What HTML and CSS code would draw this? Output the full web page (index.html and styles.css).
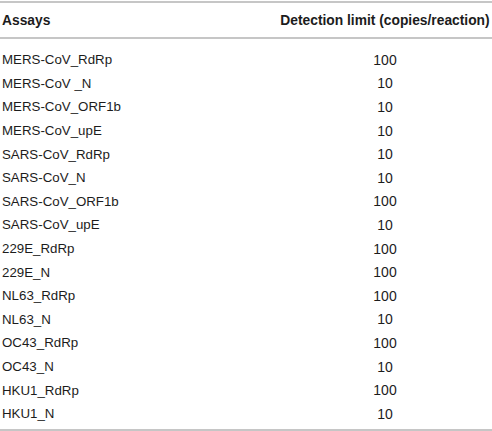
FILE: index.html
```html
<!DOCTYPE html>
<html>
<head>
<meta charset="utf-8">
<link rel="stylesheet" href="styles.css">
</head>
<body>
<div class="table">
  <div class="head">
    <div class="c1">Assays</div>
    <div class="c2">Detection limit (copies/reaction)</div>
  </div>
  <div class="body">
    <div class="c1">MERS-CoV_RdRp</div><div class="c2">100</div>
    <div class="c1">MERS-CoV _N</div><div class="c2">10</div>
    <div class="c1">MERS-CoV_ORF1b</div><div class="c2">10</div>
    <div class="c1">MERS-CoV_upE</div><div class="c2">10</div>
    <div class="c1">SARS-CoV_RdRp</div><div class="c2">10</div>
    <div class="c1">SARS-CoV_N</div><div class="c2">10</div>
    <div class="c1">SARS-CoV_ORF1b</div><div class="c2">100</div>
    <div class="c1">SARS-CoV_upE</div><div class="c2">10</div>
    <div class="c1">229E_RdRp</div><div class="c2">100</div>
    <div class="c1">229E_N</div><div class="c2">100</div>
    <div class="c1">NL63_RdRp</div><div class="c2">100</div>
    <div class="c1">NL63_N</div><div class="c2">10</div>
    <div class="c1">OC43_RdRp</div><div class="c2">100</div>
    <div class="c1">OC43_N</div><div class="c2">10</div>
    <div class="c1">HKU1_RdRp</div><div class="c2">100</div>
    <div class="c1">HKU1_N</div><div class="c2">10</div>
  </div>
</div>
</body>
</html>
```

FILE: styles.css
```css
html, body {
  margin: 0;
  padding: 0;
  background: #fff;
}
body {
  font-family: "Liberation Sans", Arial, sans-serif;
  font-size: 13.3px;
  color: #1c1c1c;
  width: 492px;
}
.table {
  margin-top: 1px;
  border-top: 2px solid #c6c6c6;
  border-bottom: 2px solid #c6c6c6;
}
.head {
  display: grid;
  grid-template-columns: 1fr 214px;
  height: 34px;
  align-items: center;
  font-weight: bold;
  font-size: 13.8px;
  border-bottom: 2px solid #c6c6c6;
}
.body {
  display: grid;
  grid-template-columns: 1fr 214px;
  grid-auto-rows: 23.6px;
  align-items: center;
  padding: 9px 0 3px;
}
.c1 {
  padding-left: 2px;
}
.c2 {
  text-align: center;
}
.body .c2 {
  font-size: 14px;
}
```
